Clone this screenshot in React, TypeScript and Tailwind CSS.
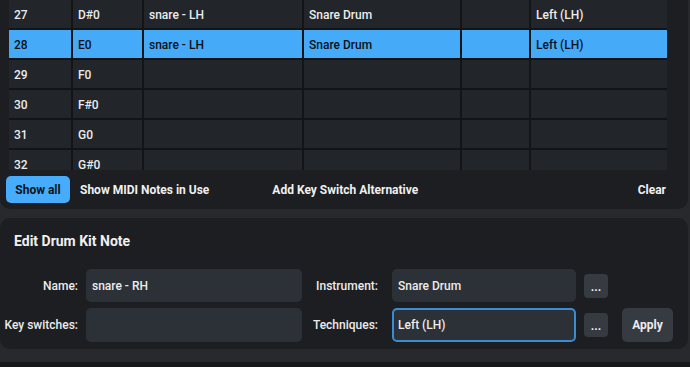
import React from 'react';

interface NoteRow {
  pitch: number;
  note: string;
  name?: string;
  instrument?: string;
  technique?: string;
  selected?: boolean;
}

const rows: NoteRow[] = [
  { pitch: 27, note: 'D#0', name: 'snare - LH', instrument: 'Snare Drum', technique: 'Left (LH)' },
  { pitch: 28, note: 'E0', name: 'snare - LH', instrument: 'Snare Drum', technique: 'Left (LH)', selected: true },
  { pitch: 29, note: 'F0' },
  { pitch: 30, note: 'F#0' },
  { pitch: 31, note: 'G0' },
  { pitch: 32, note: 'G#0' },
];

function Cell({ text, selected }: { text?: string; selected?: boolean }) {
  return (
    <div
      className={
        selected
          ? 'h-[28px] flex items-center pl-[5px] pt-[1px] bg-[#45abf9] text-[#0d1117]'
          : 'h-[28px] flex items-center pl-[5px] pt-[1px] bg-[#222529] text-[#ececec]'
      }
    >
      {text}
    </div>
  );
}

export default function App() {
  return (
    <div className="w-[690px] h-[367px] overflow-hidden bg-[#27292c] font-['Roboto',sans-serif] text-[12px] font-medium">
      {/* Note table panel */}
      <div className="w-[688px] h-[209px] bg-[#1c1e21] rounded-b-[10px] pl-[9px]">
        <div className="h-[170px] overflow-hidden w-[658px]">
          <div className="grid grid-cols-[62px_69px_158px_156px_67px_138px] gap-[2px] bg-[#121416]">
            {rows.map((r) => (
              <React.Fragment key={r.pitch}>
                <Cell text={String(r.pitch)} selected={r.selected} />
                <Cell text={r.note} selected={r.selected} />
                <Cell text={r.name} selected={r.selected} />
                <Cell text={r.instrument} selected={r.selected} />
                <Cell selected={r.selected} />
                <Cell text={r.technique} selected={r.selected} />
              </React.Fragment>
            ))}
          </div>
        </div>
        <div className="h-[39px] flex items-center -ml-[3px] pr-[22px] font-bold text-[#f0f0f0]">
          <button className="w-[64px] h-[27px] rounded-[5px] bg-[#47acfb] text-[#0d1117] font-bold">Show all</button>
          <span className="ml-[10px]">Show MIDI Notes in Use</span>
          <span className="ml-[63px]">Add Key Switch Alternative</span>
          <span className="ml-auto">Clear</span>
        </div>
      </div>

      {/* Edit panel */}
      <div className="mt-[9px] w-[688px] h-[131px] bg-[#1c1e21] rounded-[10px] pt-[14px]">
        <div className="pl-[14px] text-[14px] font-bold text-[#f0f0f0] leading-[18px]">Edit Drum Kit Note</div>
        <div className="mt-[19px] flex flex-col gap-[6px] text-[#ececec]">
          <div className="flex items-center h-[33px]">
            <span className="w-[78px] text-right">Name:</span>
            <div className="ml-[8px] w-[216px] h-[33px] rounded-[5px] bg-[#2c3137] flex items-center pl-[6px]">snare - RH</div>
            <span className="w-[76px] text-right">Instrument:</span>
            <div className="ml-[14px] w-[184px] h-[33px] rounded-[5px] bg-[#2c3137] flex items-center pl-[6px]">Snare Drum</div>
            <button className="ml-[8px] w-[24px] h-[24px] rounded-[4px] bg-[#363b42] font-bold leading-none pt-[2px]">...</button>
          </div>
          <div className="flex items-center h-[34px]">
            <span className="w-[78px] text-right">Key switches:</span>
            <div className="ml-[8px] w-[216px] h-[34px] rounded-[5px] bg-[#2c3137]"></div>
            <span className="w-[76px] text-right">Techniques:</span>
            <div className="ml-[14px] w-[184px] h-[34px] rounded-[5px] bg-[#2c3137] border-[2px] border-[#3b8cd2] flex items-center pl-[4px]">Left (LH)</div>
            <button className="ml-[8px] w-[24px] h-[24px] rounded-[4px] bg-[#363b42] font-bold leading-none pt-[2px]">...</button>
            <button className="ml-[14px] w-[51px] h-[34px] rounded-[5px] bg-[#363b42] font-bold">Apply</button>
          </div>
        </div>
      </div>
      <div className="h-[13px]"></div>
      <div className="h-[10px] bg-[#161819]"></div>
    </div>
  );
}
